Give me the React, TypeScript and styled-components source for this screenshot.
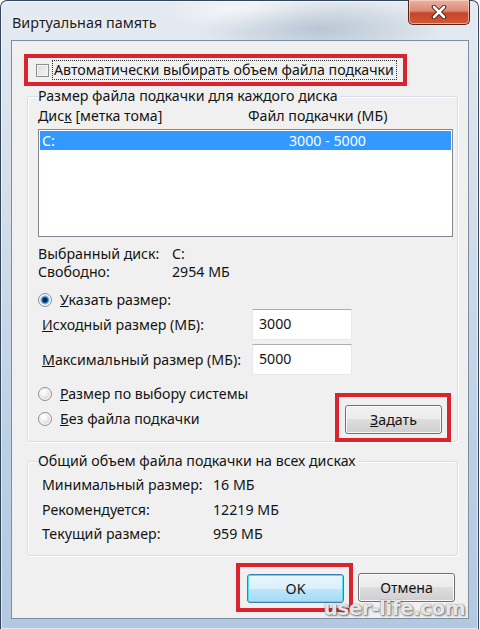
import React from 'react';
import styled, { createGlobalStyle } from 'styled-components';

const GlobalStyle = createGlobalStyle`
  html, body { margin: 0; padding: 0; }
  body {
    width: 480px;
    height: 629px;
    overflow: hidden;
    font-family: "Noto Sans", "Open Sans", "DejaVu Sans", sans-serif;
    font-size: 14.2px;
    color: #141414;
    white-space: nowrap;
  }
`;

const Frame = styled.div`
  position: relative;
  width: 479px;
  height: 629px;
  box-sizing: border-box;
  border: 1px solid #34465c;
  border-bottom: none;
  border-radius: 7px 7px 0 0;
  background:
    radial-gradient(ellipse 120px 30px at 320px 28px, rgba(150, 170, 190, 0.55), transparent),
    radial-gradient(ellipse 90px 20px at 250px 10px, rgba(255, 255, 255, 0.7), transparent),
    linear-gradient(180deg, #e4eaf0 0%, #d2dde8 35%, #bcd0e5 70%, #b3c9e1 100%);
  box-shadow: inset 0 0 0 1px rgba(255, 255, 255, 0.55);
  display: flex;
  flex-direction: column;
  padding: 0 9px 10px 10px;
`;

const TitleBar = styled.div`
  height: 39px;
  display: flex;
  justify-content: space-between;
  align-items: flex-start;
`;

const Title = styled.div`
  margin-top: 12px;
  margin-left: 1px;
  font-size: 14.4px;
  color: #1e1e1e;
  text-shadow: 0 0 8px rgba(255, 255, 255, 0.9);
`;

const CloseButton = styled.div`
  width: 62px;
  height: 25px;
  margin-top: -1px;
  margin-right: -1px;
  box-sizing: border-box;
  border: 1px solid #5b2217;
  border-top: none;
  border-radius: 0 0 5px 5px;
  background: linear-gradient(180deg, #eab3a4 0%, #dc8a74 45%, #c8442b 55%, #cf5a3b 100%);
  box-shadow: inset 0 0 0 1px rgba(255, 220, 210, 0.6);
  display: flex;
  align-items: center;
  justify-content: center;
`;

const Client = styled.div`
  flex: 1;
  box-sizing: border-box;
  border: 1px solid #7d8ea3;
  background: #f0f0f0;
  display: flex;
  flex-direction: column;
  padding: 13px 0 0 12px;
`;

const Highlight = styled.div<{ $pad: string }>`
  border: 4px solid #d9232e;
  padding: ${(p) => p.$pad};
  display: flex;
  align-items: center;
  box-sizing: border-box;
`;

const TopHighlight = styled(Highlight)`
  align-self: flex-start;
  height: 32px;
`;

const CheckBox = styled.span`
  width: 13px;
  height: 13px;
  box-sizing: border-box;
  border: 1px solid #8e8f8f;
  background: linear-gradient(135deg, #dcdcdc 0%, #f6f6f6 100%);
  box-shadow: inset 0 0 0 1px #f4f4f4;
  margin-right: 4px;
  flex: none;
`;

const FocusText = styled.span`
  outline: 1px dotted #333;
  outline-offset: 0px;
  padding: 0 2px 0 1px;
  line-height: 18px;
`;

const Group = styled.fieldset`
  margin: 0 10px 0 3px;
  padding: 0 4px 0 10px;
  border: 1px solid #d5dfe5;
  border-radius: 3px;
  box-shadow: inset 1px 1px 0 #fff, 1px 1px 0 #fff;
  min-width: 0;
`;

const Legend = styled.legend`
  padding: 0 2px 0 0;
  margin-left: 0;
  line-height: 20px;
  background: #f0f0f0;
`;

const HeaderRow = styled.div`
  display: grid;
  grid-template-columns: 210px auto;
  line-height: 18px;
  margin-top: 1px;
`;

const ListBox = styled.div`
  margin-top: 4px;
  height: 108px;
  box-sizing: border-box;
  border: 1px solid #828790;
  background: #fff;
  padding: 1px;
`;

const ListRow = styled.div<{ $selected?: boolean }>`
  display: grid;
  grid-template-columns: 247px auto;
  height: 19px;
  line-height: 19px;
  padding-left: 2px;
  background: ${(p) => (p.$selected ? '#3399ff' : 'transparent')};
  color: ${(p) => (p.$selected ? '#fff' : 'inherit')};
`;

const InfoTable = styled.div<{ $gap: number; $col: number; $indent: number }>`
  display: grid;
  grid-template-columns: ${(p) => p.$col}px auto;
  row-gap: ${(p) => p.$gap}px;
  line-height: 18px;
  padding-left: ${(p) => p.$indent}px;
`;

const RadioRow = styled.label`
  display: flex;
  align-items: center;
  gap: 8px;
  line-height: 18px;
  height: 18px;
`;

const Radio = styled.span<{ $checked?: boolean }>`
  width: 14px;
  height: 14px;
  box-sizing: border-box;
  border-radius: 50%;
  border: 1px solid #8e8f8f;
  background: ${(p) =>
    p.$checked
      ? 'radial-gradient(circle at 50% 50%, #0b2a52 0 2px, #2a78c8 3px, #8cc4ef 4px, #e6eef5 5px)'
      : 'radial-gradient(circle at 40% 35%, #fafafa 0 2px, #e0e0e0 6px)'};
  box-shadow: inset 0 0 0 1px #f8f8f8;
  flex: none;
`;

const SizeGrid = styled.div`
  display: grid;
  grid-template-columns: 210px 100px;
  grid-auto-rows: 31px;
  row-gap: 4px;
  align-items: center;
  padding-left: 4px;
`;

const TextInput = styled.div`
  height: 31px;
  box-sizing: border-box;
  border: 1px solid #e3e9ef;
  border-top-color: #abadb3;
  background: #fff;
  padding: 4px 0 0 6px;
  line-height: 20px;
`;

const BottomRow = styled.div`
  display: flex;
  justify-content: space-between;
  align-items: flex-start;
  margin-bottom: -1px;
`;

const RadioColumn = styled.div`
  display: flex;
  flex-direction: column;
  gap: 7px;
`;

const Button = styled.div<{ $default?: boolean }>`
  width: 97px;
  height: 29px;
  box-sizing: border-box;
  border: 1px solid ${(p) => (p.$default ? '#3c7fb1' : '#707070')};
  border-radius: 3px;
  display: flex;
  align-items: center;
  justify-content: center;
  line-height: 18px;
  background: ${(p) =>
    p.$default
      ? 'linear-gradient(180deg, #eaf6fd 0%, #d9f0fc 50%, #bee6fd 50%, #a7d9f5 100%)'
      : 'linear-gradient(180deg, #f2f2f2 0%, #ebebeb 50%, #dddddd 50%, #cfcfcf 100%)'};
  box-shadow: inset 0 0 0 1px ${(p) => (p.$default ? '#4fe0f5' : 'rgba(255,255,255,0.8)')};
`;

const Footer = styled.div`
  display: flex;
  justify-content: flex-end;
  align-items: center;
  gap: 5px;
  margin-top: 7px;
  padding-right: 13px;
`;

const Watermark = styled.div`
  position: absolute;
  right: 13px;
  bottom: 9px;
  font-family: "DejaVu Sans", sans-serif;
  font-weight: bold;
  font-size: 20px;
  color: rgba(255, 255, 255, 0.85);
  text-shadow: 0 0 1px #666, 1px 1px 2px rgba(60, 60, 60, 0.7);
  letter-spacing: -0.5px;
`;

export default function App() {
  return (
    <>
      <GlobalStyle />
      <Frame>
        <TitleBar>
          <Title>Виртуальная память</Title>
          <CloseButton>
            <svg width="16" height="14" viewBox="0 0 16 14">
              <path d="M3 2 L13 12 M13 2 L3 12" stroke="#4a1a10" strokeWidth="4.5" strokeLinecap="round" />
              <path d="M3 2 L13 12 M13 2 L3 12" stroke="#fff" strokeWidth="2.6" strokeLinecap="round" />
            </svg>
          </CloseButton>
        </TitleBar>
        <Client>
          <TopHighlight $pad="0 7px 0 8px">
            <CheckBox />
            <FocusText>Автоматически выбирать объем файла подкачки</FocusText>
          </TopHighlight>

          <Group>
            <Legend>Размер файла подкачки для каждого диска</Legend>
            <HeaderRow>
              <span>
                Дис<u>к</u> [метка тома]
              </span>
              <span>Файл подкачки (МБ)</span>
            </HeaderRow>
            <ListBox>
              <ListRow $selected>
                <span>C:</span>
                <span>3000 - 5000</span>
              </ListRow>
            </ListBox>
            <InfoTable $gap={0} $col={134} $indent={0} style={{ marginTop: 8 }}>
              <span>Выбранный диск:</span>
              <span>C:</span>
              <span>Свободно:</span>
              <span>2954 МБ</span>
            </InfoTable>
            <RadioRow style={{ marginTop: 10 }}>
              <Radio $checked />
              <span>
                <u>У</u>казать размер:
              </span>
            </RadioRow>
            <SizeGrid>
              <span>
                <u>И</u>сходный размер (МБ):
              </span>
              <TextInput>3000</TextInput>
              <span>
                <u>М</u>аксимальный размер (МБ):
              </span>
              <TextInput>5000</TextInput>
            </SizeGrid>
            <BottomRow>
              <RadioColumn style={{ marginTop: 10 }}>
                <RadioRow>
                  <Radio />
                  <span>
                    <u>Р</u>азмер по выбору системы
                  </span>
                </RadioRow>
                <RadioRow>
                  <Radio />
                  <span>
                    <u>Б</u>ез файла подкачки
                  </span>
                </RadioRow>
              </RadioColumn>
              <Highlight $pad="8px 5px 4px 6px" style={{ marginTop: 18, marginRight: 2 }}>
                <Button>
                  <span>
                    <u>З</u>адать
                  </span>
                </Button>
              </Highlight>
            </BottomRow>
          </Group>

          <Group style={{ marginTop: 9 }}>
            <Legend>Общий объем файла подкачки на всех дисках</Legend>
            <InfoTable $gap={6.5} $col={171} $indent={4} style={{ marginTop: 5, marginBottom: 12 }}>
              <span>Минимальный размер:</span>
              <span>16 МБ</span>
              <span>Рекомендуется:</span>
              <span>12219 МБ</span>
              <span>Текущий размер:</span>
              <span>959 МБ</span>
            </InfoTable>
          </Group>

          <Footer>
            <Highlight $pad="7px 5px 5px 7px">
              <Button $default>OK</Button>
            </Highlight>
            <Button>Отмена</Button>
          </Footer>
        </Client>
        <Watermark>user-life.com</Watermark>
      </Frame>
    </>
  );
}
